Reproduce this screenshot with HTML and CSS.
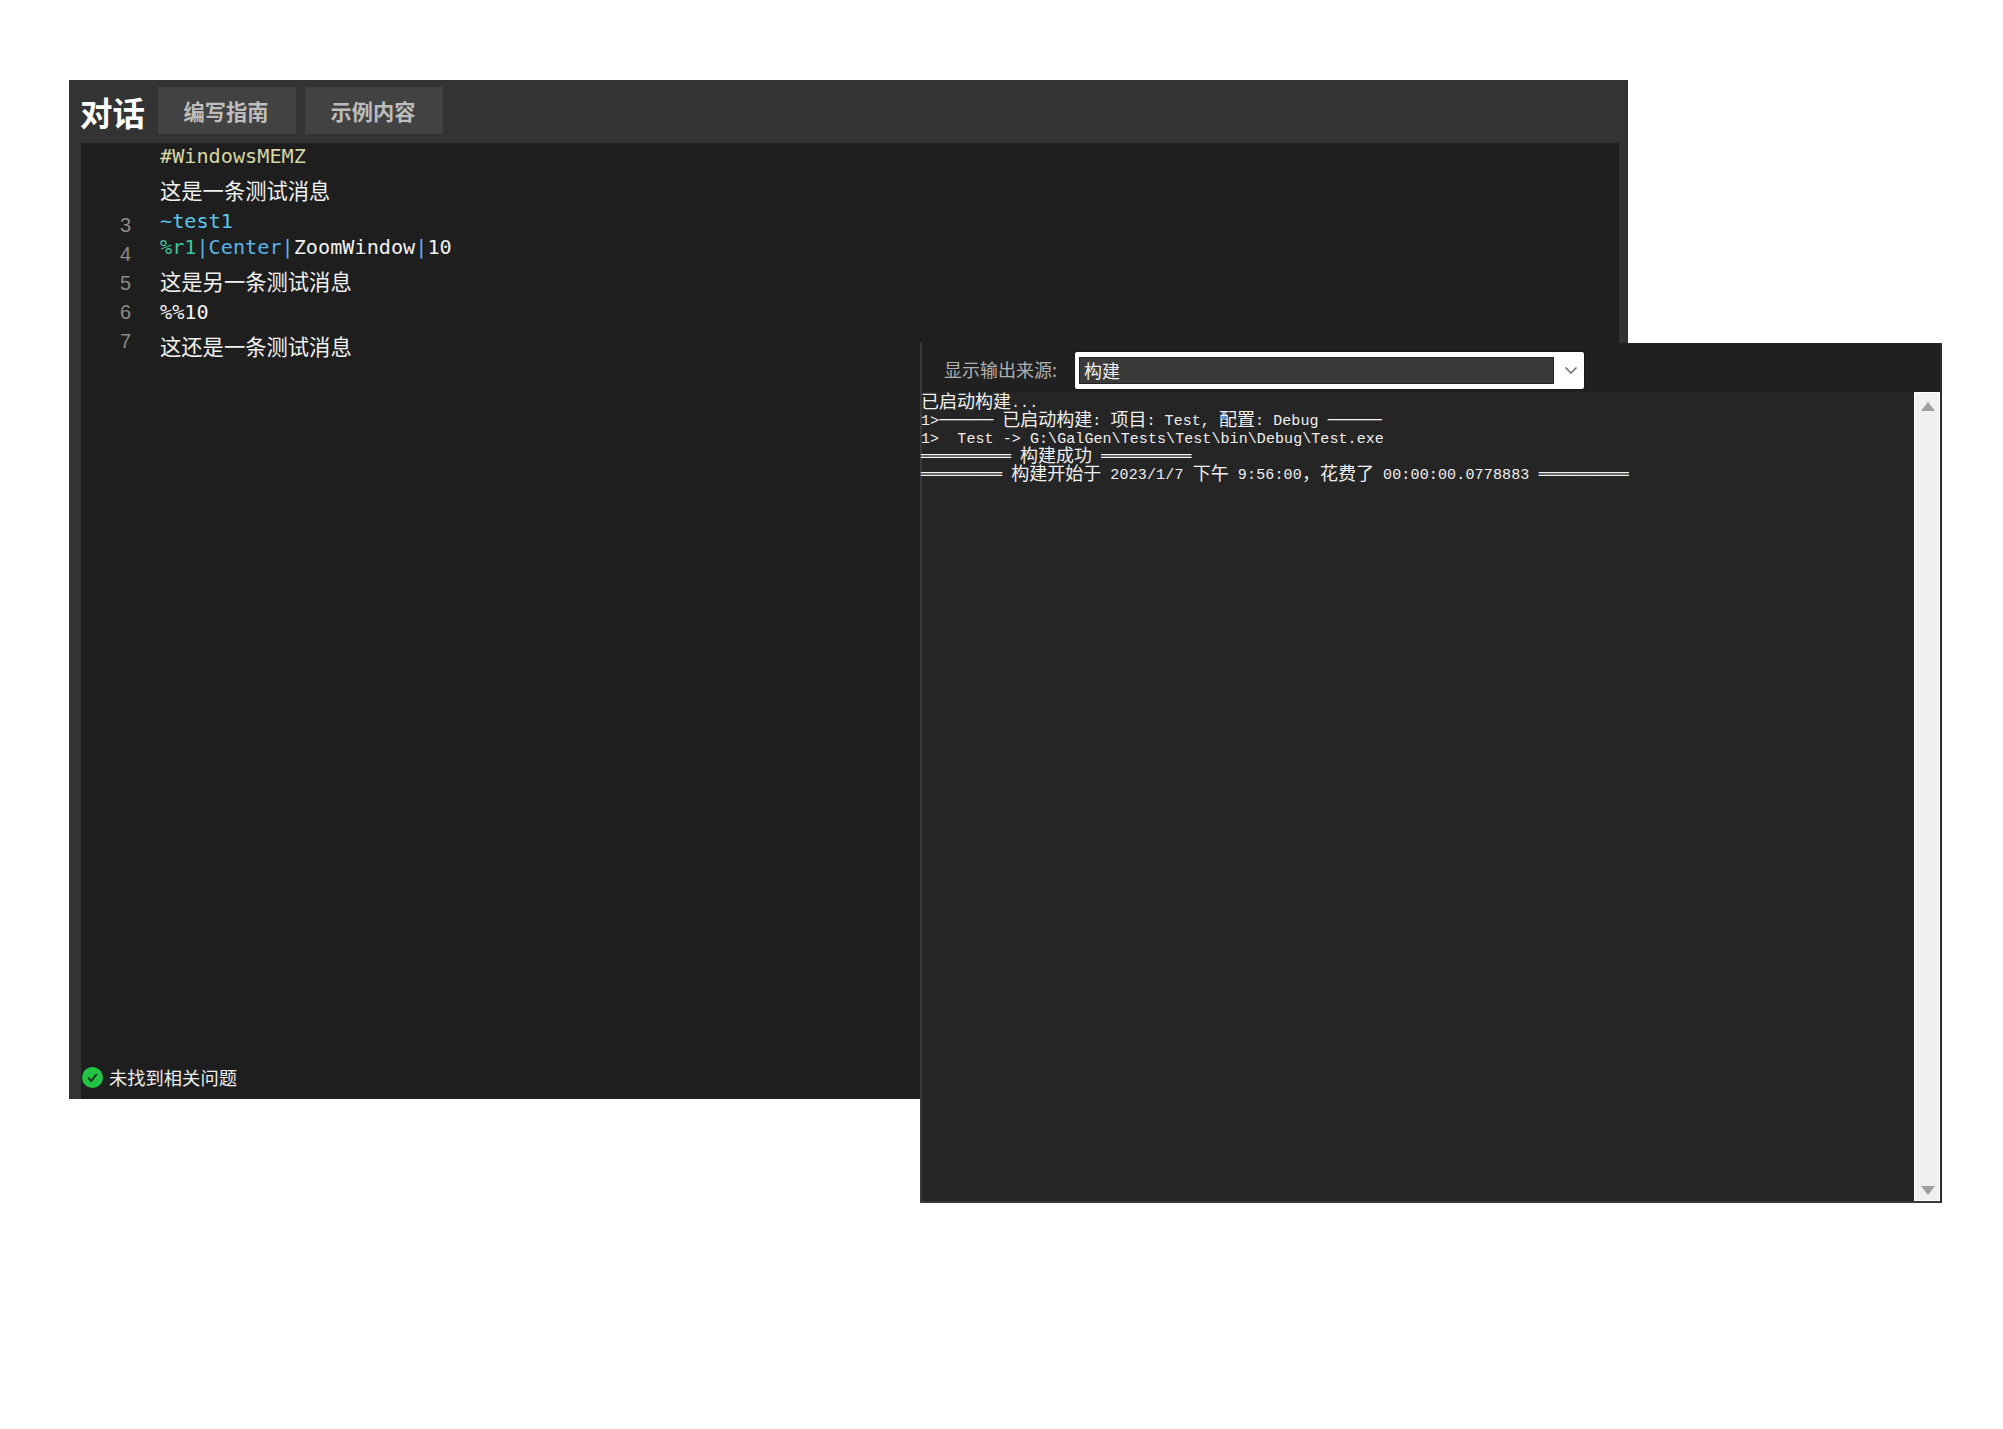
FILE: index.html
```html
<!DOCTYPE html>
<html lang="zh-CN">
<head>
<meta charset="utf-8">
<title>对话</title>
<link rel="stylesheet" href="styles.css">
</head>
<body>
<main class="desktop">
  <section class="editor-window">
    <header class="editor-head">
      <h1 class="editor-title">对话</h1>
      <button class="tab">编写指南</button>
      <button class="tab">示例内容</button>
    </header>
    <div class="editor-body">
      <div class="code-area">
        <div class="gutter">
          <span>3</span><span>4</span><span>5</span><span>6</span><span>7</span>
        </div>
        <div class="code">
          <div class="line mono yellow">#WindowsMEMZ</div>
          <div class="line cjk first">这是一条测试消息</div>
          <div class="line mono cyan gap">~test1</div>
          <div class="line mono"><span class="green">%r1</span><span class="blue">|Center|</span>ZoomWindow<span class="blue">|</span>10</div>
          <div class="line cjk tight">这是另一条测试消息</div>
          <div class="line mono short">%%10</div>
          <div class="line cjk">这还是一条测试消息</div>
        </div>
      </div>
      <footer class="status">
        <svg class="status-icon" viewBox="0 0 21 21" aria-hidden="true"><circle cx="10.5" cy="10.5" r="10.5" fill="#23c343"/><path d="M6.2 10.8l3 3.2 5.6-7" fill="none" stroke="#10331a" stroke-width="2"/></svg>
        <span>未找到相关问题</span>
      </footer>
    </div>
  </section>

  <section class="output-window">
    <header class="output-head">
      <label class="output-label">显示输出来源:</label>
      <div class="select">
        <div class="select-value">构建</div>
        <div class="select-arrow">
          <svg viewBox="0 0 14 9" width="14" height="9" aria-hidden="true"><path d="M1.5 1.5L7 7l5.500-5.500" fill="none" stroke="#666" stroke-width="1.500"/></svg>
        </div>
      </div>
    </header>
    <div class="output-body">
      <pre class="log"><span class="row"><b>已启动构建</b>...</span><span class="row">1&gt;<i>──────</i> <b>已启动构建</b>: <b>项目</b>: Test, <b>配置</b>: Debug <i>──────</i></span><span class="row">1&gt;  Test -&gt; G:\GalGen\Tests\Test\bin\Debug\Test.exe</span><span class="row"><i>══════════</i> <b>构建成功</b> <i>══════════</i></span><span class="row wide"><i>═════════</i> <b>构建开始于</b> 2023/1/7 <b>下午</b> 9:56:00<b>，花费了</b> 00:00:00.0778883 <i>══════════</i></span></pre>
      <div class="scrollbar">
        <span class="arrow-up"></span>
        <span class="arrow-down"></span>
      </div>
    </div>
  </section>
</main>
</body>
</html>
```
FILE: styles.css
```css
* { box-sizing: border-box; }
html, body { margin: 0; background: #fff; }
.desktop { position: relative; width: 2003px; height: 1429px; overflow: hidden; }

.editor-window {
  position: absolute; left: 69px; top: 80px; width: 1559px; height: 1019px;
  background: #333; display: flex; flex-direction: column;
  font-family: "Noto Sans CJK SC", "Liberation Sans", sans-serif;
}
.editor-head { height: 63px; display: flex; align-items: flex-start; padding-left: 11px; gap: 9px; flex: none; }
.editor-title { margin: 9px 0 0; width: 69px; font-size: 32.500px; line-height: 46px; font-weight: 700; color: #fff; white-space: nowrap; }
.tab {
  width: 138px; height: 47px; margin-top: 7px; border: 0; padding: 0 2px 0 0; background: #424242;
  color: #bdbdbd; font: 700 21.200px/47px "Noto Sans CJK SC", sans-serif;
}
.editor-body {
  flex: 1; margin: 0 9px 0 12px; background: #1e1e1e;
  display: flex; flex-direction: column; justify-content: space-between;
}
.code-area { display: flex; }
.gutter {
  width: 50px; padding-top: 68px; display: flex; flex-direction: column;
  color: #8a8a8a; font: 20px/29px "Liberation Sans", sans-serif; text-align: right;
}
.code { margin-left: 29px; padding-top: 1px; color: #f2f2f2; }
.line { white-space: pre; }
.mono { height: 25px; font: 20.200px/25px "DejaVu Sans Mono", monospace; }
.mono.gap { height: 26px; }
.mono.short { height: 25.500px; line-height: 27px; }
.cjk { font-size: 21.300px; height: 41px; line-height: 41px; }
.cjk.first { height: 40px; }
.cjk.tight { height: 39px; }
.yellow { color: #d7d7a8; }
.cyan { color: #5cc6e8; }
.green { color: #3fc39d; }
.blue { color: #5cb3e8; }

.status { display: flex; align-items: center; gap: 6px; height: 42px; padding: 0 0 2px 1px; color: #ececec; font-size: 18.300px; }
.status-icon { width: 21px; height: 21px; flex: none; margin-top: 1px; }

.output-window {
  position: absolute; left: 920px; top: 343px; width: 1022px; height: 860px;
  background: #202020; display: flex; flex-direction: column;
  border-left: 2px solid #3a3a3a; border-right: 2px solid #2a2a2a; border-bottom: 2px solid #3a3a3a;
}
.output-head { height: 49px; display: flex; align-items: flex-start; flex: none; }
.output-label {
  margin: 14px 0 0 22px; width: 131px; color: #b0b0b0;
  font: 18px/24px "Noto Sans CJK SC", sans-serif;
}
.select {
  margin-top: 9px; width: 509px; height: 37px; background: #fff; border-radius: 2px;
  display: flex; padding: 5px 0 5px 4px; box-shadow: 0 0 2px #000;
}
.select-value {
  width: 475px; height: 27px; background: #3a3a3a; color: #f0f0f0; padding-left: 4px;
  font: 18px/24px "Noto Sans CJK SC", sans-serif; border: 1px solid #222;
}
.select-arrow { flex: 1; display: flex; align-items: center; justify-content: center; padding-left: 3px; }

.output-body { flex: 1; display: flex; background: #252525; }
.log {
  flex: 1; margin: 0 0 0 -1px; padding-top: 3px; color: #f0f0f0;
  font: 15px/18px "Liberation Mono", "Noto Sans CJK SC", monospace; letter-spacing: 0.075px;
}
.log b { font: 18px/0 "Noto Sans CJK SC", sans-serif; vertical-align: -1px; letter-spacing: 0; }
.log i { font: 15px/0 "DejaVu Sans Mono", monospace; letter-spacing: -0.030px; }
.row { display: block; height: 18px; white-space: pre; }
.row.wide { letter-spacing: 0.150px; }
.scrollbar {
  width: 26px; flex: none; background: #f0f0f0; border: 1px solid #fff;
  display: flex; flex-direction: column; justify-content: space-between; align-items: center;
  padding: 9px 0 5px 2px;
}
.arrow-up, .arrow-down { width: 0; height: 0; border-left: 7px solid transparent; border-right: 7px solid transparent; }
.arrow-up { border-bottom: 9px solid #a0a0a0; }
.arrow-down { border-top: 9px solid #a0a0a0; }
```
